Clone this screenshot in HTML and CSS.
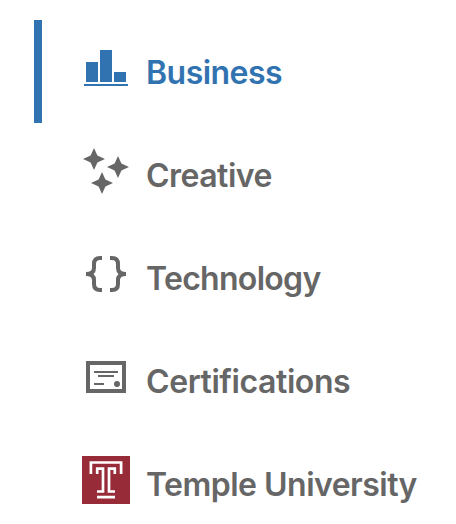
FILE: index.html
```html
<!DOCTYPE html>
<html lang="en">
<head>
    <meta charset="UTF-8">
    <meta name="viewport" content="width=device-width, initial-scale=1.0">
    <title>Categories</title>
    <link rel="stylesheet" href="styles.css">
</head>
<body>
    <nav class="categories">
        <a class="category active" href="#">
            <svg class="icon" viewBox="0 0 48 48">
                <path d="M4 18h12v20H4zM18 6h12v32H18zM32 28h12v10H32zM2 40h44v2H2z"/>
            </svg>
            <span class="label">Business</span>
        </a>
        <a class="category" href="#">
            <svg class="icon" viewBox="0 0 48 48">
                <path d="M12 1L15.4 8.6L23 12L15.4 15.4L12 23L8.6 15.4L1 12L8.6 8.6z"/>
                <path d="M36 9L39.4 16.6L47 20L39.4 23.4L36 31L32.6 23.4L25 20L32.6 16.6z"/>
                <path d="M20 25L23.4 32.6L31 36L23.4 39.4L20 47L16.6 39.4L9 36L16.6 32.6z"/>
            </svg>
            <span class="label">Creative</span>
        </a>
        <a class="category" href="#">
            <svg class="icon outline" viewBox="0 0 48 48">
                <path d="M20 8h-2q-6 0-6 6v4q0 6-8 6q8 0 8 6v4q0 6 6 6h2"/>
                <path d="M28 8h2q6 0 6 6v4q0 6 8 6q-8 0-8 6v4q0 6-6 6h-2"/>
            </svg>
            <span class="label technology">Technology</span>
        </a>
        <a class="category" href="#">
            <svg class="icon" viewBox="0 0 48 48">
                <path fill-rule="evenodd" d="M4 8h40v32H4zM8 12v24h32V12z"/>
                <path d="M12 18h24v2H12zM16 22h16v2H16zM12 30h10v2H12z"/>
                <circle cx="35" cy="31" r="3"/>
            </svg>
            <span class="label certifications">Certifications</span>
        </a>
        <a class="category" href="#">
            <svg class="icon logo" viewBox="0 0 48 48">
                <rect width="48" height="48"/>
                <path d="M8.9 18V6.5H39.1V18"/>
                <path d="M15.2 18V12.7H21V35.5H15M32.8 18V12.7H27V35.5H33M15 41.2H33"/>
            </svg>
            <span class="label">Temple University</span>
        </a>
    </nav>
</body>
</html>
```

FILE: styles.css
```css
body {
    margin: 0;
    background-color: #fff;
    font-family: Inter, "Liberation Sans", sans-serif;
}

.categories {
    padding: 20px 0 0 34px;
}

.category {
    display: flex;
    align-items: flex-start;
    gap: 16px;
    box-sizing: border-box;
    height: 103px;
    padding: 24px 0 0 40px;
    border-left: 8px solid transparent;
    color: #666;
    text-decoration: none;
}

.category:last-child {
    height: 80px;
}

.category.active {
    border-left-color: #3173b0;
    color: #3173b0;
}

.icon {
    flex: none;
    width: 48px;
    height: 48px;
    fill: currentColor;
}

.outline {
    fill: none;
    stroke: currentColor;
    stroke-width: 4;
}

.logo {
    fill: none;
    stroke: #fff;
    stroke-width: 2.7;
}

.logo rect {
    fill: #982b38;
    stroke: none;
}

.label {
    padding-top: 9px;
    font-size: 32px;
    font-weight: 600;
    line-height: 40px;
    letter-spacing: -0.52px;
    white-space: nowrap;
}

.technology {
    letter-spacing: -0.7px;
}

.certifications {
    letter-spacing: -0.42px;
}
```
